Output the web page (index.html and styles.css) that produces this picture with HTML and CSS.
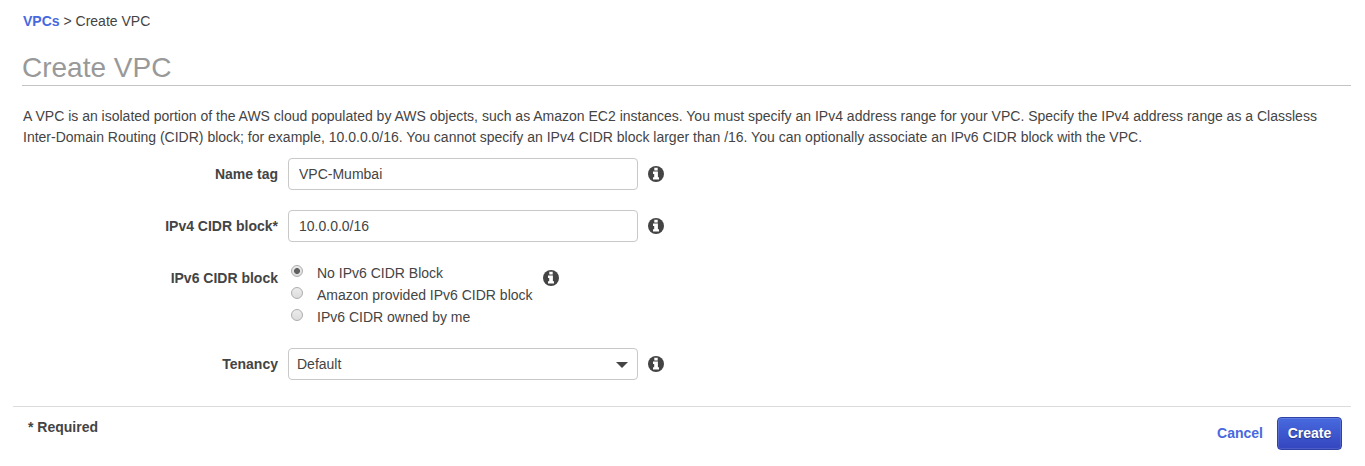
FILE: index.html
```html
<!DOCTYPE html>
<html lang="en">
<head>
<meta charset="utf-8">
<title>Create VPC</title>
<link rel="stylesheet" href="styles.css">
</head>
<body>
<svg class="sprite" aria-hidden="true">
  <symbol id="info" viewBox="0 0 16 16">
    <circle cx="8" cy="8" r="8"/>
    <path fill="#fff" d="M6.3 1.8H9.7V4.4H6.3ZM5 5.6H9.9V11.2H11V13.5H5V11.2H6.2V7.9H5Z"/>
  </symbol>
</svg>
<nav class="breadcrumb"><a class="link" href="#">VPCs</a> &gt; <span>Create VPC</span></nav>
<h1 class="title">Create VPC</h1>
<p class="intro">A VPC is an isolated portion of the AWS cloud populated by AWS objects, such as Amazon EC2 instances. You must specify an IPv4 address range for your VPC. Specify the IPv4 address range as a Classless Inter-Domain Routing (CIDR) block; for example, 10.0.0.0/16. You cannot specify an IPv4 CIDR block larger than /16. You can optionally associate an IPv6 CIDR block with the VPC.</p>
<form class="form">
  <div class="row">
    <label class="label" for="name">Name tag</label>
    <input class="field" id="name" type="text" value="VPC-Mumbai">
    <svg class="info"><use href="#info"/></svg>
  </div>
  <div class="row">
    <label class="label" for="cidr">IPv4 CIDR block*</label>
    <input class="field" id="cidr" type="text" value="10.0.0.0/16">
    <svg class="info"><use href="#info"/></svg>
  </div>
  <div class="row row-options">
    <span class="label">IPv6 CIDR block</span>
    <div class="options">
      <label class="option"><input class="radio" type="radio" name="ipv6" checked>No IPv6 CIDR Block</label>
      <label class="option"><input class="radio" type="radio" name="ipv6">Amazon provided IPv6 CIDR block</label>
      <label class="option"><input class="radio" type="radio" name="ipv6">IPv6 CIDR owned by me</label>
    </div>
    <svg class="info"><use href="#info"/></svg>
  </div>
  <div class="row">
    <span class="label">Tenancy</span>
    <div class="field select"><span>Default</span><svg class="caret" viewBox="0 0 12 6"><path d="M0 0H12L6 6Z"/></svg></div>
    <svg class="info"><use href="#info"/></svg>
  </div>
</form>
<footer class="footer">
  <span class="required">* Required</span>
  <div class="actions">
    <a class="link" href="#">Cancel</a>
    <button class="create" type="button">Create</button>
  </div>
</footer>
</body>
</html>
```
FILE: styles.css
```css
* {
  box-sizing: border-box;
}

body {
  margin: 0;
  padding: 11px 14px 0 13px;
  background: #fff;
  color: #444;
  font: 14px/21px "Liberation Sans", Arial, sans-serif;
}

.sprite {
  display: none;
}

.link {
  color: #4769df;
  font-weight: bold;
  text-decoration: none;
}

.breadcrumb {
  margin-left: 10px;
}

.title {
  height: 36px;
  margin: 18px 0 20px 9px;
  border-bottom: 1px solid #c4c4c4;
  color: #999;
  font-size: 28px;
  font-weight: normal;
  line-height: 36px;
}

.intro {
  margin: 0 10px 10px;
}

.form {
  display: flex;
  flex-direction: column;
  gap: 20px;
}

.row {
  display: flex;
  align-items: flex-start;
}

.label {
  width: 265px;
  margin-right: 10px;
  font-weight: bold;
  line-height: 32px;
  text-align: right;
}

.field {
  width: 350px;
  height: 32px;
  padding: 0 10px;
  border: 1px solid #c8c8c8;
  border-radius: 4px;
  background: #fff;
  color: #444;
  font: inherit;
}

.info {
  width: 16px;
  height: 16px;
  margin: 8px 0 0 10px;
  fill: #444;
}

.row-options {
  height: 66px;
}

.option {
  display: flex;
  height: 22px;
  line-height: 22px;
}

.radio {
  appearance: none;
  width: 12px;
  height: 12px;
  margin: 3px 14px 0 3px;
  border: 1px solid #adadad;
  border-radius: 50%;
  background: linear-gradient(#ebebeb, #dcdcdc);
}

.radio:checked {
  background: radial-gradient(circle, #606060 2.6px, transparent 3.3px), linear-gradient(#ebebeb, #dcdcdc);
}

.select {
  display: flex;
  align-items: center;
  justify-content: space-between;
  padding: 0 9px 0 8px;
}

.caret {
  width: 12px;
  height: 6px;
  margin-top: 2px;
  fill: #444;
}

.footer {
  display: flex;
  justify-content: space-between;
  margin-top: 26px;
  padding: 10px 9px 0 15px;
  border-top: 1px solid #dcdcdc;
}

.required {
  font-weight: bold;
}

.actions {
  display: flex;
  align-items: center;
  gap: 14px;
}

.create {
  width: 65px;
  height: 33px;
  padding: 0;
  border: 1px solid #2f42a8;
  border-radius: 4px;
  background: linear-gradient(#486ade, #3445bf);
  box-shadow: inset 0 0 0 1px rgba(255, 255, 255, 0.12);
  color: #fff;
  font: bold 14px/21px "Liberation Sans", Arial, sans-serif;
  text-shadow: 0 1px 1px rgba(0, 0, 0, 0.4);
}
```
